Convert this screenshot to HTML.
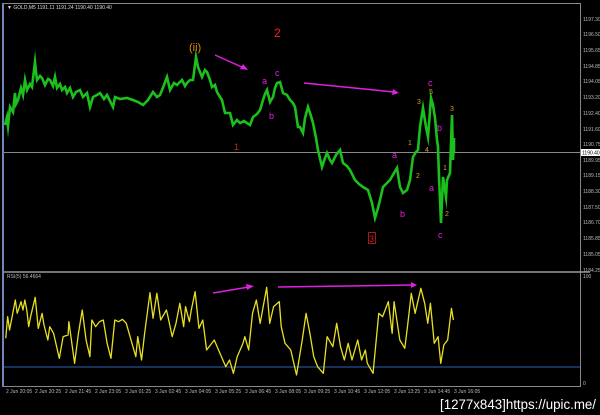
<!DOCTYPE html>
<html><head><meta charset="utf-8"><style>
html,body{margin:0;padding:0;background:#000;width:600px;height:415px;overflow:hidden}
svg{display:block}
.ax{font-family:"Liberation Sans",sans-serif;font-size:5px;fill:#bbb}
</style></head><body>
<svg width="600" height="415" viewBox="0 0 600 415" xmlns="http://www.w3.org/2000/svg" font-family="Liberation Sans, sans-serif">
<rect width="600" height="415" fill="#000"/>
<line x1="3" y1="3" x2="3" y2="387" stroke="#6f86b8" stroke-width="2"/>
<line x1="4" y1="3.5" x2="580" y2="3.5" stroke="#888" stroke-width="1"/>
<line x1="580.5" y1="3" x2="580.5" y2="387" stroke="#888" stroke-width="1"/>
<line x1="4" y1="272" x2="590" y2="272" stroke="#999" stroke-width="1.5"/>
<line x1="4" y1="386.5" x2="580" y2="386.5" stroke="#888" stroke-width="1"/>
<line x1="4" y1="152.5" x2="580" y2="152.5" stroke="#888" stroke-width="1"/>
<line x1="4" y1="367" x2="580" y2="367" stroke="#2f5fb5" stroke-width="1"/>
<text x="7" y="9" class="ax" style="fill:#ddd">▼ GOLD,M5  1191.11  1191.24  1190.40  1190.40</text>
<text x="7" y="278" class="ax">RSI(5) 56.4664</text>
<g class="ax">
<text x="583" y="21">1197.30</text><text x="583" y="36">1196.50</text><text x="583" y="52">1195.65</text>
<text x="583" y="68">1194.85</text><text x="583" y="83">1194.05</text><text x="583" y="99">1193.20</text>
<text x="583" y="115">1192.40</text><text x="583" y="131">1191.60</text><text x="583" y="146">1190.75</text>
<text x="583" y="162">1189.95</text><text x="583" y="177">1189.15</text><text x="583" y="193">1188.30</text>
<text x="583" y="209">1187.50</text><text x="583" y="224">1186.70</text><text x="583" y="240">1185.85</text>
<text x="583" y="256">1185.05</text><text x="583" y="272">1184.25</text>
<text x="583" y="278">100</text><text x="583" y="385">0</text>
</g>
<rect x="581" y="149" width="19" height="7" fill="#fff"/>
<text x="582" y="154.5" class="ax" style="fill:#000">1190.40</text>
<g class="ax">
<text x="6" y="393">2 Jun 20:05</text><text x="35" y="393">2 Jun 20:25</text><text x="65" y="393">2 Jun 21:45</text>
<text x="95" y="393">2 Jun 23:05</text><text x="125" y="393">3 Jun 01:25</text><text x="155" y="393">3 Jun 02:45</text>
<text x="185" y="393">3 Jun 04:05</text><text x="215" y="393">3 Jun 05:25</text><text x="245" y="393">3 Jun 06:45</text>
<text x="275" y="393">3 Jun 08:05</text><text x="304" y="393">3 Jun 09:25</text><text x="334" y="393">3 Jun 10:45</text>
<text x="364" y="393">3 Jun 12:05</text><text x="394" y="393">3 Jun 13:25</text><text x="424" y="393">3 Jun 14:45</text>
<text x="454" y="393">3 Jun 16:05</text>
</g>
<polyline fill="none" stroke="#1cc01c" stroke-width="2.6" stroke-linejoin="miter" stroke-miterlimit="10" points="5,125 7,117 8,126 10,107 13,112 15,93 16,104 18,100 21,88 23,95 25,80 27,90 30,84 32,87 35,62 36,72 37,80 40,76 42,78 45,85 48,79 50,80 53,86 55,77 57,88 60,84 62,90 65,87 67,93 70,88 73,97 76,92 80,90 83,97 87,93 90,107 93,97 97,95 100,93 104,99 107,95 110,101 113,107 115,97 120,99 127,98 133,100 138,102 143,105 148,100 153,92 157,97 160,95 164,85 167,77 170,90 174,83 177,85 182,80 185,86 187,83 190,80 193,80 196,57 198,67 202,77 205,70 207,72 210,80 212,87 215,85 217,92 220,97 222,100 225,113 230,113 233,125 237,120 240,123 244,121 247,123 250,125 253,117 257,114 260,110 263,100 265,94 267,90 270,102 273,97 275,88 277,83 280,82 283,93 287,95 290,100 293,103 295,107 298,127 300,127 303,133 305,118 308,107 311,116 313,123 316,138 318,150 322,167 325,158 327,153 330,160 332,163 336,155 340,150 343,163 347,166 350,170 355,180 359,184 363,187 368,190 372,203 375,218 378,208 380,200 383,187 386,184 390,180 394,173 397,168 400,187 403,193 407,190 410,180 413,157 416,152 418,150 420,127 423,108 426,127 428,137 431,98 433,105 435,118 437,140 438,147 439,177 441,223 443,177 446,197 447,180 450,173 452,115 453,160 454,138 454,152"/>
<text x="189" y="51" style="font-size:11px;fill:#e08a00">(ii)</text>
<text x="274" y="37" style="font-size:12px;fill:#ff2020">2</text>
<text x="262" y="84" style="font-size:9px;fill:#e020e0">a</text>
<text x="275" y="76" style="font-size:9px;fill:#e020e0">c</text>
<text x="269" y="119" style="font-size:9px;fill:#e020e0">b</text>
<text x="234" y="150" style="font-size:9px;fill:#d02020">1</text>
<rect x="368.5" y="232.5" width="7" height="11" fill="none" stroke="#d02020" stroke-width="0.8"/>
<text x="369" y="242" style="font-size:9px;fill:#d02020">3</text>
<g style="font-size:7px">
<text x="428" y="86" style="font-size:9px;fill:#e020e0">c</text>
<text x="429" y="94" style="fill:#d4a020">5</text>
<text x="417" y="104" style="fill:#d4a020">3</text>
<text x="450" y="111" style="fill:#d4a020">3</text>
<text x="437" y="131" style="font-size:9px;fill:#e020e0">b</text>
<text x="408" y="145" style="fill:#d4a020">1</text>
<text x="425" y="152" style="fill:#d4a020">4</text>
<text x="392" y="158" style="font-size:9px;fill:#e020e0">a</text>
<text x="443" y="170" style="fill:#d4a020">1</text>
<text x="416" y="178" style="fill:#d4a020">2</text>
<text x="429" y="191" style="font-size:9px;fill:#e020e0">a</text>
<text x="400" y="217" style="font-size:9px;fill:#e020e0">b</text>
<text x="445" y="216" style="fill:#d4a020">2</text>
<text x="438" y="238" style="font-size:9px;fill:#e020e0">c</text>
</g>
<g stroke="#e020e0" stroke-width="1.5" fill="#e020e0">
<line x1="215" y1="55" x2="244" y2="68"/><polygon points="248,70 240,69 243,64" stroke="none"/>
<line x1="304" y1="83" x2="394" y2="92"/><polygon points="399,93 392,95 393,89" stroke="none"/>
<line x1="213" y1="293" x2="249" y2="287"/><polygon points="254,286 247,290 246,284" stroke="none"/>
<line x1="278" y1="287" x2="412" y2="285"/><polygon points="417,285 411,288 411,282" stroke="none"/>
</g>
<g transform="translate(0,260) scale(0.3826,0.33333)">
<polyline fill="none" stroke="#e8e020" stroke-width="1.3" vector-effect="non-scaling-stroke" stroke-linejoin="round" points="15,235 20,170 25,210 40,120 45,160 55,125 60,150 65,120 70,150 75,200 80,170 92,112 100,205 110,160 115,195 125,240 130,200 140,220 155,295 165,230 178,225 180,185 195,310 205,220 215,150 225,240 235,290 240,180 250,200 260,185 270,180 280,250 290,295 300,180 310,185 320,178 330,190 340,230 355,290 360,230 370,300 378,220 392,98 400,175 410,100 420,180 435,150 440,175 450,230 460,190 470,130 480,200 485,140 495,185 500,150 510,95 520,205 530,180 540,270 560,240 575,280 590,320 600,300 610,340 620,290 635,250 640,230 650,270 660,160 670,120 680,190 697,82 705,190 715,140 730,125 735,200 745,250 760,270 775,345 790,240 800,160 810,220 820,290 830,320 845,340 855,230 870,260 880,190 890,260 900,300 910,250 920,300 935,240 945,300 955,270 960,310 975,340 990,160 1000,170 1015,125 1025,220 1030,125 1045,240 1058,265 1065,200 1075,100 1085,160 1100,85 1110,130 1118,190 1125,130 1135,250 1145,230 1152,310 1160,255 1170,240 1180,145 1185,180"/>
</g>
<text x="440" y="409" style="font-family:'Liberation Sans Narrow','Liberation Sans',sans-serif;font-size:13.5px;fill:#fff" textLength="156" lengthAdjust="spacingAndGlyphs">[1277x843]https://upic.me/</text>
</svg>
</body></html>
